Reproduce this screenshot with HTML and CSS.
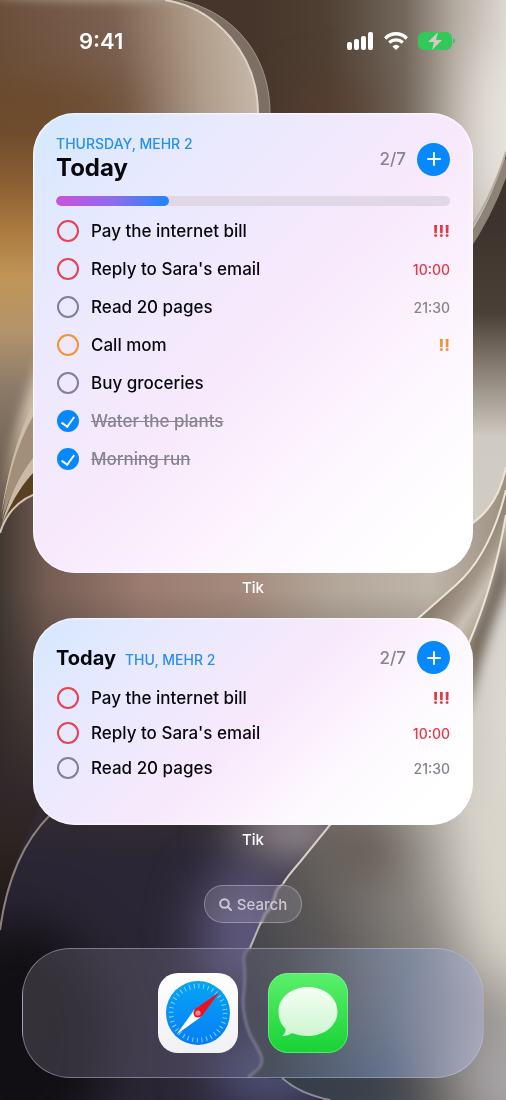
FILE: index.html
```html
<!DOCTYPE html>
<html lang="en">
<head>
    <meta charset="UTF-8">
    <meta name="viewport" content="width=device-width, initial-scale=1.0">
    <title>Tik widgets</title>
    <link rel="stylesheet" href="styles.css">
</head>
<body>
<svg class="wallpaper" viewBox="0 0 506 1100" preserveAspectRatio="xMidYMid slice" aria-hidden="true">
    <defs>
        <filter id="soft" filterUnits="userSpaceOnUse" x="-200" y="-200" width="900" height="1500" color-interpolation-filters="sRGB"><feGaussianBlur stdDeviation="26"/></filter>
        <filter id="soft-small" filterUnits="userSpaceOnUse" x="-200" y="-200" width="900" height="1500" color-interpolation-filters="sRGB"><feGaussianBlur stdDeviation="6"/></filter>
        <linearGradient id="top-right" x1="250" x2="506" y1="0" y2="0" gradientUnits="userSpaceOnUse">
            <stop offset="0" stop-color="#46352a"/>
            <stop offset=".3" stop-color="#4f4033"/>
            <stop offset=".6" stop-color="#72665a"/>
            <stop offset=".8" stop-color="#b3aaa0"/>
            <stop offset="1" stop-color="#dcd8d1"/>
        </linearGradient>
        <linearGradient id="right-side" x1="0" x2="0" y1="220" y2="530" gradientUnits="userSpaceOnUse">
            <stop offset="0" stop-color="#3d332c"/>
            <stop offset=".3" stop-color="#4b4037"/>
            <stop offset=".5" stop-color="#8f857a"/>
            <stop offset=".7" stop-color="#cfcac2"/>
            <stop offset="1" stop-color="#d2cdc4"/>
        </linearGradient>
        <linearGradient id="lobe" x1="0" x2="262" y1="60" y2="30" gradientUnits="userSpaceOnUse">
            <stop offset="0" stop-color="#6b4e3a"/>
            <stop offset=".45" stop-color="#7c6150"/>
            <stop offset=".75" stop-color="#b09c8a"/>
            <stop offset="1" stop-color="#cabdaf"/>
        </linearGradient>
        <linearGradient id="amber" x1="0" x2="0" y1="80" y2="520" gradientUnits="userSpaceOnUse">
            <stop offset="0" stop-color="#6a4a2e" stop-opacity="0"/>
            <stop offset=".12" stop-color="#6f4c2d"/>
            <stop offset=".23" stop-color="#8a5e32"/>
            <stop offset=".34" stop-color="#ab7a3f"/>
            <stop offset=".45" stop-color="#c09557"/>
            <stop offset=".57" stop-color="#b3946c"/>
            <stop offset=".7" stop-color="#8c7a69"/>
            <stop offset="1" stop-color="#5d5146"/>
        </linearGradient>
        <linearGradient id="middle" x1="0" x2="506" y1="0" y2="0" gradientUnits="userSpaceOnUse">
            <stop offset="0" stop-color="#423832"/>
            <stop offset=".09" stop-color="#735c52"/>
            <stop offset=".28" stop-color="#9c7b70"/>
            <stop offset=".48" stop-color="#a58b7e"/>
            <stop offset=".66" stop-color="#b3a79a"/>
            <stop offset=".85" stop-color="#c0b5a9"/>
            <stop offset="1" stop-color="#9d9184"/>
        </linearGradient>
        <linearGradient id="night-fade" x1="0" x2="0" y1="590" y2="860" gradientUnits="userSpaceOnUse">
            <stop offset="0" stop-color="#2b2524" stop-opacity="0"/>
            <stop offset=".7" stop-color="#2e2729" stop-opacity=".9"/>
            <stop offset="1" stop-color="#2b2635"/>
        </linearGradient>
        <linearGradient id="outer-left" x1="0" x2="0" y1="780" y2="930" gradientUnits="userSpaceOnUse">
            <stop offset="0" stop-color="#2e2421" stop-opacity="0"/>
            <stop offset=".4" stop-color="#2e2421"/>
            <stop offset="1" stop-color="#1b1718"/>
        </linearGradient>
        <linearGradient id="right-low" x1="250" x2="506" y1="1000" y2="880" gradientUnits="userSpaceOnUse">
            <stop offset="0" stop-color="#3f4048"/>
            <stop offset=".35" stop-color="#5c5958"/>
            <stop offset=".65" stop-color="#8a8580"/>
            <stop offset="1" stop-color="#cbc7bf"/>
        </linearGradient>
        <linearGradient id="fold" x1="448" x2="492" y1="588" y2="616" gradientUnits="userSpaceOnUse">
            <stop offset="0" stop-color="#8d7f70"/>
            <stop offset=".35" stop-color="#a5998b"/>
            <stop offset=".6" stop-color="#c9c0b4"/>
            <stop offset="1" stop-color="#a69a8c"/>
        </linearGradient>
        <clipPath id="clip-night">
            <path d="M0 560H506V700H384L330 825L300 862L283 884L278 889L272 905L264 915L261 924L250 948L243 956L245 975L243 1000L250 1035L262 1060L248 1077L282 1079Q300 1095 330 1100H0Z"/>
        </clipPath>
        <clipPath id="clip-right">
            <path d="M384 680H468V645Q494 585 506 515V1100H330Q300 1095 282 1079L252 1077Q264 1066 262 1060L250 1035L243 1000L245 975L243 956L250 948L261 924L264 915L272 905L278 889L283 884L300 862L330 825Z"/>
        </clipPath>
        <clipPath id="clip-lobe">
            <path d="M0 0H165C216 8 258 55 258 113V200H0Z"/>
        </clipPath>
    </defs>

    <!-- upper right -->
    <rect width="506" height="1100" fill="#46382e"/>
    <rect x="250" width="256" height="260" fill="url(#top-right)"/>
    <rect x="180" width="71" height="120" fill="#46352a"/>
    <ellipse cx="335" cy="110" rx="40" ry="20" fill="#5b3a2e" filter="url(#soft)"/>
    <ellipse cx="506" cy="130" rx="30" ry="90" fill="#e8e5df" filter="url(#soft)"/>
    <path d="M506 153Q492 205 460 250V540H506Z" fill="url(#right-side)"/>
    <path d="M508 160Q492 210 464 251" fill="none" stroke="#8d8275" stroke-width="8"/>
    <path d="M506 152Q490 203 460 244" fill="none" stroke="#b5ab9f" stroke-width="2"/>

    <!-- upper left lobe -->
    <path d="M0 0H180C234 12 270 55 270 113V200H0Z" fill="#7d6f63"/>
    <g clip-path="url(#clip-lobe)">
        <rect width="262" height="200" fill="url(#lobe)"/>
        <ellipse cx="20" cy="110" rx="120" ry="30" fill="#6b4a2b" filter="url(#soft)"/>
        <ellipse cx="120" cy="-12" rx="150" ry="12" fill="#b9ab9b" filter="url(#soft-small)"/>
    </g>
    <path d="M165 0C216 8 258 55 258 113" fill="none" stroke="#ddd1c3" stroke-width="2"/>
    <path d="M180 0C234 12 270 55 270 113" fill="none" stroke="#9f9386" stroke-width="1"/>
    <rect y="80" width="60" height="460" fill="url(#amber)"/>

    <!-- left folds -->
    <path d="M44 350Q14 420 1 515Q16 440 44 400Z" fill="#d6c5ae" filter="url(#soft-small)"/>
    <path d="M40 390Q12 440 1 515Q16 440 40 410Z" fill="#cdbca6"/>
    <path d="M40 405Q10 450 2 520Q14 480 40 455Z" fill="#a28e79"/>
    <path d="M40 450Q14 478 2 524Q16 490 40 468Z" fill="#cbbba6"/>
    <path d="M40 466Q14 490 4 524Q22 500 40 494Z" fill="#5a4022"/>

    <!-- middle band -->
    <path d="M0 533Q10 500 44 491V480H473V524Q500 505 506 467V850H0Z" fill="url(#middle)"/>
    <path d="M0 533Q10 500 44 491" fill="none" stroke="#d3c2ac" stroke-width="2"/>

    <!-- lower left -->
    <g clip-path="url(#clip-night)">
        <rect y="560" width="506" height="300" fill="url(#night-fade)"/>
        <rect y="859" width="506" height="250" fill="#2b2635"/>
        <ellipse cx="20" cy="1040" rx="90" ry="120" fill="#110f13" filter="url(#soft)"/>
        <ellipse cx="295" cy="830" rx="60" ry="34" fill="#9a9195" filter="url(#soft)"/>
        <ellipse cx="245" cy="935" rx="45" ry="70" fill="#605a80" filter="url(#soft)"/>
        <ellipse cx="270" cy="1070" rx="60" ry="40" fill="#50527a" filter="url(#soft)"/>
        <path d="M0 780H55Q10 855 0 930Z" fill="url(#outer-left)"/>
    </g>
    <path d="M50 815Q10 855 0 930" fill="none" stroke="#8d817b" stroke-width="2"/>

    <!-- lower right -->
    <g clip-path="url(#clip-right)">
        <rect x="230" y="500" width="276" height="600" fill="url(#right-low)"/>
        <ellipse cx="515" cy="730" rx="30" ry="170" fill="#e2ded6" filter="url(#soft)"/>
        <ellipse cx="360" cy="850" rx="44" ry="30" fill="#5f5650" filter="url(#soft)"/>
        <ellipse cx="510" cy="880" rx="44" ry="100" fill="#dad5ca" filter="url(#soft)"/>
        <ellipse cx="340" cy="1085" rx="80" ry="30" fill="#303c4a" filter="url(#soft)"/>
        <ellipse cx="506" cy="1080" rx="40" ry="50" fill="#aaa7ab" filter="url(#soft)"/>
        <path d="M506 515Q494 585 466 645V720Q484 640 510 580Z" fill="#74685c" filter="url(#soft-small)"/>
    </g>
    <path d="M506 490Q490 555 456 585T414 622V680H468V645Q494 585 506 515Z" fill="url(#fold)"/>
    <g fill="none" stroke="#efe4d4" stroke-width="2">
        <path d="M506 467Q498 508 468 526"/>
        <path d="M506 490Q490 555 456 585T414 622"/>
        <path d="M506 515Q494 585 468 645"/>
        <path d="M334 820L300 862Q286 878 283 884" stroke="#d9cdc7"/>
        <path d="M283 884Q276 888 275 896Q272 908 265 914L261 924" stroke="#aaa2ab"/>
        <path d="M261 922L250 948" stroke="#bdb4ba"/>
    </g>
    <path d="M250 948Q243 952 244 962Q246 980 243 1000Q243 1018 250 1035Q262 1055 262 1060Q262 1068 248 1077" fill="none" stroke="#79768e" stroke-width="3"/>
    <path d="M282 1078Q300 1094 330 1100" fill="none" stroke="#8d8c9c" stroke-width="2"/>
</svg>

<header class="status-bar">
    <time class="clock">9:41</time>
    <div class="status-icons">
        <svg width="27" height="18" viewBox="0 0 27 18" fill="#fff" role="img" aria-label="Signal">
            <rect x="0" y="10" width="5" height="8" rx="2"/>
            <rect x="7" y="7" width="5" height="11" rx="2"/>
            <rect x="14" y="4" width="5" height="14" rx="2"/>
            <rect x="21" y="0" width="5" height="18" rx="2"/>
        </svg>
        <svg width="24" height="18" viewBox="0 0 24 18" fill="none" stroke="#fff" stroke-width="3.4" role="img" aria-label="Wi-Fi">
            <path d="M1.2 6.4Q6 1.8 12 1.8T22.8 6.4"/>
            <path d="M5.2 10.6Q8.2 7.9 12 7.9T18.8 10.6"/>
            <path d="M12 18L8.4 14.4Q12 11.2 15.6 14.4Z" fill="#fff" stroke="none"/>
        </svg>
        <svg width="37" height="18" viewBox="0 0 37 18" role="img" aria-label="Battery charging">
            <rect width="34" height="18" rx="6" fill="#34c759"/>
            <path d="M35 6Q37 7 37 9T35 12Z" fill="#34c759"/>
            <path d="M20 0L10 10H16L14 18L24 8H18Z" fill="#d3ccc4"/>
        </svg>
    </div>
</header>

<main class="home">
    <section class="widget widget-large">
        <div class="widget-header">
            <div>
                <p class="date">THURSDAY, MEHR 2</p>
                <h1 class="title">Today</h1>
            </div>
            <div class="actions">
                <span class="count">2/7</span>
                <button class="add-button" type="button" aria-label="Add task">
                    <svg width="14" height="14" viewBox="0 0 14 14"><path d="M7 1V13M1 7H13"/></svg>
                </button>
            </div>
        </div>
        <progress class="progress" value="2" max="7" aria-label="Tasks done"></progress>
        <ul class="tasks">
            <li class="task high"><label><input type="checkbox"><span>Pay the internet bill</span></label><strong class="priority">!!!</strong></li>
            <li class="task high"><label><input type="checkbox"><span>Reply to Sara's email</span></label><time>10:00</time></li>
            <li class="task"><label><input type="checkbox"><span>Read 20 pages</span></label><time>21:30</time></li>
            <li class="task medium"><label><input type="checkbox"><span>Call mom</span></label><strong class="priority">!!</strong></li>
            <li class="task"><label><input type="checkbox"><span>Buy groceries</span></label></li>
            <li class="task"><label><input type="checkbox" checked><span>Water the plants</span></label></li>
            <li class="task"><label><input type="checkbox" checked><span>Morning run</span></label></li>
        </ul>
    </section>
    <p class="widget-name">Tik</p>

    <section class="widget widget-medium">
        <div class="widget-header">
            <div class="heading-inline">
                <h2 class="title">Today</h2>
                <p class="date">THU, MEHR 2</p>
            </div>
            <div class="actions">
                <span class="count">2/7</span>
                <button class="add-button" type="button" aria-label="Add task">
                    <svg width="14" height="14" viewBox="0 0 14 14"><path d="M7 1V13M1 7H13"/></svg>
                </button>
            </div>
        </div>
        <ul class="tasks">
            <li class="task high"><label><input type="checkbox"><span>Pay the internet bill</span></label><strong class="priority">!!!</strong></li>
            <li class="task high"><label><input type="checkbox"><span>Reply to Sara's email</span></label><time>10:00</time></li>
            <li class="task"><label><input type="checkbox"><span>Read 20 pages</span></label><time>21:30</time></li>
        </ul>
    </section>
    <p class="widget-name">Tik</p>

    <button class="search-button" type="button">
        <svg width="13" height="13" viewBox="0 0 13 13" aria-hidden="true"><circle cx="5.5" cy="5.5" r="4.3"/><path d="M8.7 8.7L12 12"/></svg>
        Search
    </button>
</main>

<nav class="dock">
    <a href="#safari" aria-label="Safari">
        <svg class="app-icon" viewBox="0 0 80 80">
            <defs>
                <linearGradient id="safari-bg" x2="0" y2="1"><stop stop-color="#fff"/><stop offset="1" stop-color="#f1f1f3"/></linearGradient>
                <linearGradient id="safari-dial" x2="0" y2="1"><stop stop-color="#05a5f5"/><stop offset="1" stop-color="#077df8"/></linearGradient>
            </defs>
            <rect width="80" height="80" rx="20" fill="url(#safari-bg)"/>
            <circle cx="40" cy="40" r="32" fill="url(#safari-dial)"/>
            <circle cx="40" cy="40" r="27" fill="none" stroke="#7fd3fb" stroke-width="4.6" stroke-dasharray="1 3.712"/>
            <path d="M61.5 19L43.5 43.5L36.5 36.5Z" fill="#f0101c"/>
            <path d="M18.5 61.5L36.5 36.5L43.5 43.5Z" fill="#fff"/>
            <circle cx="40" cy="40" r="4.5" fill="#f0101c"/>
            <circle cx="40" cy="40" r="2.6" fill="#f58d92"/>
        </svg>
    </a>
    <a href="#messages" aria-label="Messages">
        <svg class="app-icon" viewBox="0 0 80 80">
            <defs>
                <linearGradient id="messages-bg" x2="0" y2="1"><stop stop-color="#5bf06c"/><stop offset="1" stop-color="#17d235"/></linearGradient>
                <linearGradient id="messages-bubble" x2="0" y2="1"><stop stop-color="#f3fff3"/><stop offset="1" stop-color="#cef5d1"/></linearGradient>
            </defs>
            <rect width="80" height="80" rx="20" fill="url(#messages-bg)"/>
            <rect x=".5" y=".5" width="79" height="79" rx="19.5" fill="none" stroke="#9df5a6" stroke-opacity=".5"/>
            <path d="M40 14C56.5 14 69.5 24.7 69.5 38.5S56.5 63 40 63Q31 63 24 60Q20 63 14 63Q18 60 17.5 56Q10.5 49.5 10.5 38.5C10.5 24.7 23.5 14 40 14Z" fill="url(#messages-bubble)"/>
        </svg>
    </a>
</nav>
</body>
</html>
```
FILE: styles.css
```css
* {
    box-sizing: border-box;
}

body {
    font-family: 'Inter', 'Helvetica', 'Arial', sans-serif;
    display: flex;
    flex-direction: column;
    min-height: 100vh;
    margin: 0;
    color: #08080c;
    background-color: #46382e;
}

h1, h2, p, ul {
    margin: 0;
    padding: 0;
}

.wallpaper {
    position: fixed;
    top: 0;
    left: 0;
    width: 100%;
    height: 100%;
    z-index: -1;
}

.status-bar {
    display: flex;
    justify-content: space-between;
    align-items: center;
    height: 82px;
    padding: 0 51px 0 79px;
    color: white;
}

.clock {
    font-size: 22px;
    font-weight: 600;
}

.status-icons {
    display: flex;
    gap: 10px;
}

.home {
    display: flex;
    flex-direction: column;
    align-items: center;
    padding: 31px 33px 0;
}

.widget {
    width: 100%;
    padding: 23px;
    border-radius: 42px;
    box-shadow: inset 0 0 2px 1px rgba(255, 255, 255, 0.8);
}

.widget-large {
    min-height: 460px;
    padding-top: 22px;
    background: linear-gradient(135deg, #d4e8ff 0%, #e9e9fe 22%, #f8e9fc 50%, #fdf7fe 74%, #ffffff 92%);
}

.widget-medium {
    min-height: 207px;
    background: linear-gradient(135deg, #d4e8ff 0%, #e9e9fe 24%, #f8e9fc 50%, #fdf9fe 72%, #ffffff 90%);
}

.widget-header {
    display: flex;
    justify-content: space-between;
    align-items: center;
}

.heading-inline {
    display: flex;
    align-items: baseline;
    gap: 9px;
}

.date {
    font-size: 14px;
    line-height: 18px;
    font-weight: 500;
    color: #2490f0;
}

.title {
    font-size: 24px;
    line-height: 30px;
    font-weight: 700;
}

.widget-medium .title {
    font-size: 20px;
}

.actions {
    display: flex;
    align-items: center;
    gap: 11px;
}

.count {
    font-size: 17px;
    font-weight: 500;
    color: #87838f;
}

.add-button {
    display: flex;
    justify-content: center;
    align-items: center;
    width: 33px;
    height: 33px;
    padding: 0;
    border: none;
    border-radius: 50%;
    background-color: #0688fe;
    cursor: pointer;
}

.add-button path {
    fill: none;
    stroke: white;
    stroke-width: 2;
    stroke-linecap: round;
}

.progress {
    display: block;
    width: 100%;
    height: 10px;
    margin: 13px 0 14px;
    border: none;
    border-radius: 5px;
    background-color: #e0d8e6;
    overflow: hidden;
    appearance: none;
}

.progress::-webkit-progress-bar {
    background-color: #e0d8e6;
}

.progress::-webkit-progress-value {
    border-radius: 5px;
    background: linear-gradient(90deg, #c853dc, #8f6bee 50%, #1f86fb);
}

.tasks {
    display: flex;
    flex-direction: column;
    gap: 16px;
    list-style: none;
}

.widget-medium .tasks {
    gap: 13px;
    margin-top: 13px;
}

.task {
    display: flex;
    justify-content: space-between;
    align-items: center;
    height: 22px;
    color: #87838f;
}

.task label {
    display: flex;
    align-items: center;
    gap: 12px;
    padding-left: 1px;
    font-size: 17px;
    font-weight: 500;
    color: #08080c;
}

.task input {
    display: grid;
    place-items: center;
    width: 22px;
    height: 22px;
    margin: 0;
    border: 2px solid #83818f;
    border-radius: 50%;
    appearance: none;
}

.task input:checked {
    border-color: #0688fe;
    background-color: #0688fe;
}

.task input:checked::after {
    content: '';
    width: 6px;
    height: 11px;
    margin-bottom: 2px;
    border: solid white;
    border-width: 0 2px 2px 0;
    transform: rotate(36deg);
}

.task input:checked + span {
    color: #87838f;
    text-decoration: line-through;
}

.task time {
    font-size: 14px;
    font-weight: 500;
}

.priority {
    font-size: 16px;
    font-weight: 800;
}

.high {
    color: #e03a48;
}

.high input {
    border-color: #ea4150;
}

.medium {
    color: #ea9440;
}

.medium input {
    border-color: #f49236;
}

.widget-name {
    height: 45px;
    padding-top: 6px;
    font-size: 15px;
    line-height: 18px;
    font-weight: 500;
    color: white;
}

.search-button {
    display: flex;
    justify-content: center;
    align-items: center;
    gap: 5px;
    width: 98px;
    height: 38px;
    margin-top: 15px;
    padding: 0;
    border: 1px solid rgba(255, 255, 255, 0.3);
    border-radius: 19px;
    background-color: rgba(190, 180, 200, 0.2);
    backdrop-filter: blur(1px);
    font-family: inherit;
    font-size: 15px;
    font-weight: 500;
    color: #cdc8d2;
    cursor: pointer;
}

.search-button svg {
    fill: none;
    stroke: #cdc8d2;
    stroke-width: 2;
    stroke-linecap: round;
}

.dock {
    display: flex;
    justify-content: center;
    align-items: center;
    gap: 30px;
    height: 130px;
    margin: 25px 22px 22px;
    border: 1px solid rgba(200, 205, 230, 0.45);
    border-radius: 48px;
    background: linear-gradient(100deg, rgba(120, 115, 125, 0.35) 0%, rgba(110, 105, 135, 0.35) 45%, rgba(110, 120, 140, 0.3) 55%, rgba(125, 145, 180, 0.6) 80%, rgba(175, 175, 200, 0.75) 100%);
    backdrop-filter: blur(1px);
}

.dock a {
    display: block;
}

.app-icon {
    display: block;
    width: 80px;
    height: 80px;
}
```
